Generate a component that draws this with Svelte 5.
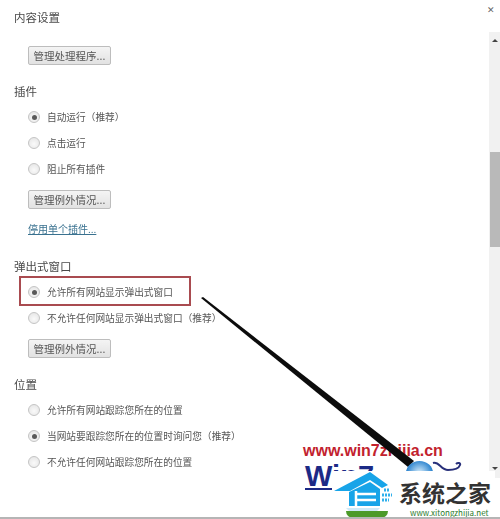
<script>
	const plugins = [
		{ label: '自动运行', note: '（推荐）', on: true },
		{ label: '点击运行', on: false },
		{ label: '阻止所有插件', on: false }
	];
	const location = [
		{ label: '允许所有网站跟踪您所在的位置', on: false },
		{ label: '当网站要跟踪您所在的位置时询问您', note: '（推荐）', on: true },
		{ label: '不允许任何网站跟踪您所在的位置', on: false }
	];
</script>

{#snippet radio(item)}
	<div class="option">
		<span class="dot" class:on={item.on}></span>
		<span>{item.label}{#if item.note}<span class="note">{item.note}</span>{/if}</span>
	</div>
{/snippet}

<div class="page">
	<div class="content">
		<h1>内容设置</h1>
		<button class="first">管理处理程序...</button>

		<h2 class="plugins">插件</h2>
		<div class="group">
			{#each plugins as item}
				{@render radio(item)}
			{/each}
			<button>管理例外情况...</button>
			<a href="#top">停用单个插件...</a>
		</div>

		<h2 class="popups">弹出式窗口</h2>
		<div class="group">
			<div class="boxed">
				{@render radio({ label: '允许所有网站显示弹出式窗口', on: true })}
			</div>
			{@render radio({ label: '不允许任何网站显示弹出式窗口', note: '（推荐）', on: false })}
			<button>管理例外情况...</button>
		</div>

		<h2 class="place">位置</h2>
		<div class="group">
			{#each location as item}
				{@render radio(item)}
			{/each}
		</div>
	</div>

	<div class="close">✕</div>

	<div class="scrollbar">
		<span class="up"></span>
		<span class="thumb"></span>
		<span class="down"></span>
	</div>

	<div class="mark">
		<div class="url">www.win7zhijia.cn</div>
		<div class="wordmark">Win7</div>
		<span class="rule"></span>
		<svg class="arrow" width="500" height="519" viewBox="0 0 500 519">
			<polygon points="201,298 203,297 414,461 408,467" fill="#0c0c0c" />
		</svg>
		<span class="ball"></span>
		<svg class="swirl" width="32" height="14" viewBox="0 0 32 14">
			<path d="M1 3c6-2 8 7 15 7s11-2 12-5c1-2-2-3-4-1" fill="none" stroke="#28307a" stroke-width="2" />
		</svg>
		<div class="band">
			<svg class="house" width="62" height="42" viewBox="0 0 62 42">
				<polygon points="2,20 38,1 56,14 50,17 38,9 18,20" fill="#18a4e8" />
				<polygon points="17,21 38,11 48,18 48,35 17,35" fill="#18a4e8" />
				<path d="M24 20v15M24 23h20M24 29h20" stroke="#fff" stroke-width="2.5" fill="none" />
				<path d="M52 19h6M50 24h10M50 29h7" stroke="#30b0ec" stroke-width="3" stroke-dasharray="2 1" fill="none" />
				<polygon points="14,37 48,37 44,41 18,41" fill="#cfeaf8" />
			</svg>
			<span class="brand">系统之家</span>
		</div>
		<div class="foot">
			<span class="green"></span>
			<span class="site">www.xitongzhijia.net</span>
		</div>
	</div>

	<div class="edge"></div>
</div>

<style>
	:global(body) {
		margin: 0;
		background: #fff;
	}

	.page {
		position: relative;
		width: 500px;
		height: 519px;
		overflow: hidden;
		background: #fff;
		color: #555;
		font-family: "Noto Sans CJK SC", "Liberation Sans", sans-serif;
		font-size: 9.7px;
	}

	.content {
		display: flex;
		flex-direction: column;
		align-items: flex-start;
		padding: 9px 0 0 14px;
		filter: blur(0.3px);
	}

	h1,
	h2 {
		margin: 0;
		font-size: 11.5px;
		font-weight: 400;
		line-height: 17px;
		color: #4a4a4a;
	}

	.plugins {
		margin-top: 18px;
	}

	.popups {
		margin-top: 22px;
	}

	.place {
		margin-top: 18px;
	}

	button {
		width: 83px;
		height: 19px;
		margin: 0;
		padding: 0;
		border: 1px solid #bdbdbd;
		border-radius: 2px;
		background: linear-gradient(#f4f4f4, #e2e2e2);
		color: #555;
		font: inherit;
		font-size: 10.5px;
		line-height: 17px;
	}

	.first {
		margin: 20px 0 0 14px;
	}

	.group {
		display: flex;
		flex-direction: column;
		align-items: flex-start;
		padding: 4px 0 0 14px;
	}

	.group button {
		margin-top: 8px;
	}

	.option {
		display: flex;
		align-items: center;
		gap: 7px;
		height: 26px;
		white-space: nowrap;
	}

	/* TC centres the full-width brackets, as the screenshot's font does */
	.note {
		font-family: "Noto Sans CJK TC", sans-serif;
	}

	.dot {
		box-sizing: border-box;
		display: flex;
		align-items: center;
		justify-content: center;
		width: 12px;
		height: 12px;
		border: 1px solid #c4c4c4;
		border-radius: 50%;
		background: radial-gradient(circle at 50% 60%, #fafafa, #e2e2e2);
	}

	.dot.on::after {
		content: "";
		width: 5px;
		height: 5px;
		border-radius: 50%;
		background: #5a5a5a;
	}

	a {
		margin-top: 12px;
		color: #39718f;
		font-size: 10px;
		line-height: 15px;
		text-decoration: underline;
	}

	.boxed {
		position: relative;
	}

	.boxed::after {
		content: "";
		position: absolute;
		top: -3px;
		left: -9px;
		width: 168px;
		height: 26px;
		border: 2px solid #a94b50;
	}

	.close {
		position: absolute;
		top: 4px;
		left: 487px;
		color: #666;
		font-size: 9px;
		line-height: 12px;
	}

	.scrollbar {
		position: absolute;
		top: 32px;
		left: 489px;
		width: 11px;
		height: 446px;
		background: #f1f1f1;
	}

	.up,
	.down {
		position: absolute;
		left: 3px;
		width: 0;
		height: 0;
		border-left: 3px solid transparent;
		border-right: 3px solid transparent;
	}

	.up {
		top: 7px;
		border-bottom: 3px solid #444;
	}

	.down {
		top: 435px;
		border-top: 3px solid #444;
	}

	.thumb {
		position: absolute;
		top: 120px;
		left: 1px;
		width: 10px;
		height: 95px;
		background: #b9b9b9;
	}

	.mark {
		position: absolute;
		top: 440px;
		left: 300px;
		width: 200px;
		height: 79px;
	}

	.arrow {
		position: absolute;
		top: -440px;
		left: -300px;
	}

	.url {
		position: absolute;
		top: 2px;
		left: 3px;
		color: #c2222e;
		font-family: "Liberation Sans", sans-serif;
		font-size: 16px;
		font-weight: 700;
		line-height: 18px;
		white-space: nowrap;
	}

	.wordmark {
		position: absolute;
		top: 22px;
		left: 5px;
		color: #1c2a86;
		font-family: "Liberation Sans", sans-serif;
		font-size: 29px;
		font-weight: 700;
		line-height: 28px;
	}

	.rule {
		position: absolute;
		top: 48px;
		left: 5px;
		width: 27px;
		height: 2px;
		background: #1c2a86;
	}

	.ball {
		position: absolute;
		top: 21px;
		left: 106px;
		width: 27px;
		height: 24px;
		border-radius: 50%;
		background: radial-gradient(circle, #b8daf3 15%, #2f86d0 70%, #1f5fa8);
	}

	.swirl {
		position: absolute;
		top: 20px;
		left: 132px;
	}

	.band {
		position: absolute;
		top: 31px;
		left: 32px;
		width: 163px;
		height: 40px;
		background: #fff;
	}

	.house {
		position: absolute;
		top: 0;
		left: 0;
	}

	.brand {
		position: absolute;
		left: 67px;
		top: 9px;
		color: #333;
		font-size: 23px;
		font-weight: 700;
		line-height: 24px;
		white-space: nowrap;
	}

	.foot {
		position: absolute;
		top: 71px;
		left: 46px;
		display: flex;
		gap: 22px;
	}

	.green {
		width: 42px;
		height: 7px;
		background: #4c9a2a;
		border-radius: 0 0 20px 20px;
	}

	.site {
		margin-top: -2px;
		color: #2a7a2a;
		font-size: 8px;
		line-height: 8px;
		white-space: nowrap;
	}

	.edge {
		position: absolute;
		left: 0;
		right: 0;
		bottom: 0;
		height: 2px;
		background: #b5b5b5;
	}
</style>
